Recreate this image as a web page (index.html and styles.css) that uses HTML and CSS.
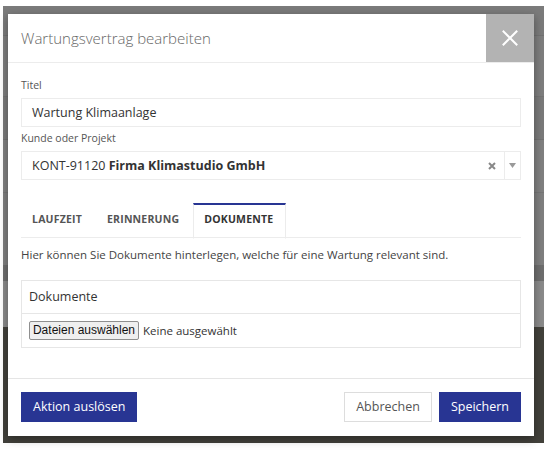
FILE: index.html
```html
<!DOCTYPE html>
<html lang="de">
<head>
<meta charset="utf-8">
<title>Wartungsvertrag bearbeiten</title>
<link rel="stylesheet" href="styles.css">
</head>
<body>
<div class="page">
  <div class="backdrop">
    <div class="bd bd-a"></div>
    <div class="bd bd-b"></div>
    <div class="bd bd-c"></div>
    <div class="bd bd-d"></div>
    <div class="bd bd-e"></div>
    <div class="bd bd-f"></div>
    <div class="bd bd-g"></div>
    <div class="bd bd-dark"></div>
  </div>

  <div class="modal">
    <div class="modal-header">
      <h1 class="modal-title">Wartungsvertrag bearbeiten</h1>
      <button class="close-btn" aria-label="Schließen">
        <svg width="16" height="16" viewBox="0 0 16 16"><path d="M1.5 1.5 L14.5 14.5 M14.5 1.5 L1.5 14.5" stroke="#fff" stroke-width="2" fill="none" stroke-linecap="square"/></svg>
      </button>
    </div>

    <div class="modal-body">
      <label class="field-label">Titel</label>
      <div class="input">Wartung Klimaanlage</div>

      <label class="field-label">Kunde oder Projekt</label>
      <div class="select">
        <span class="select-value">KONT-91120 <b>Firma Klimastudio GmbH</b></span>
        <span class="select-clear">
          <svg width="8" height="8" viewBox="0 0 8 8"><path d="M1 1 L7 7 M7 1 L1 7" stroke="#888" stroke-width="2" fill="none"/></svg>
        </span>
        <span class="select-arrow">
          <svg width="7" height="5" viewBox="0 0 7 5"><path d="M0 0 L7 0 L3.5 5 Z" fill="#999"/></svg>
        </span>
      </div>

      <div class="tabs">
        <div class="tab">Laufzeit</div>
        <div class="tab">Erinnerung</div>
        <div class="tab active">Dokumente</div>
      </div>

      <p class="hint">Hier können Sie Dokumente hinterlegen, welche für eine Wartung relevant sind.</p>

      <div class="panel">
        <div class="panel-head">Dokumente</div>
        <div class="panel-body">
          <span class="file-btn">Dateien auswählen</span>
          <span class="file-status">Keine ausgewählt</span>
        </div>
      </div>
    </div>

    <div class="modal-footer">
      <button class="btn btn-primary">Aktion auslösen</button>
      <div class="footer-right">
        <button class="btn btn-default">Abbrechen</button>
        <button class="btn btn-primary">Speichern</button>
      </div>
    </div>
  </div>
</div>
</body>
</html>
```

FILE: styles.css
```css
* { box-sizing: border-box; }

html, body {
  margin: 0;
  padding: 0;
  background: #ffffff;
  font-family: "Open Sans", "Noto Sans", sans-serif;
}

.page {
  position: relative;
  width: 559px;
  height: 455px;
  overflow: hidden;
}

.backdrop {
  margin: 6px 0 0 3px;
  width: 541px;
  height: 437px;
  display: flex;
  flex-direction: column;
  background: #7e7e7e;
}

.bd { flex: 0 0 auto; }
.bd-a { height: 30px; background: #7b7b7b; border-bottom: 1px solid #727272; }
.bd-b { height: 61px; background: #7e7e7e; border-bottom: 1px solid #747474; }
.bd-c { height: 43px; background: #7a7a7a; border-bottom: 1px solid #727272; }
.bd-d { height: 53px; background: #808080; border-bottom: 1px solid #767676; }
.bd-e { height: 72px; background: #7f7f7f; }
.bd-f { height: 16px; background: #6e6e6e; }
.bd-g { height: 46px; background: #8a8a8a; }
.bd-dark { flex: 1 1 auto; background: #42413b; }

.modal {
  position: absolute;
  left: 8px;
  top: 14px;
  width: 526px;
  height: 422px;
  background: #ffffff;
  box-shadow: 0 3px 9px rgba(0, 0, 0, 0.35);
  display: flex;
  flex-direction: column;
}

.modal-header {
  height: 49px;
  display: flex;
  align-items: flex-start;
  border-bottom: 1px solid #ececec;
}

.modal-title {
  flex: 1 1 auto;
  margin: 0;
  padding: 14px 0 0 13px;
  font-size: 15px;
  font-weight: 300;
  line-height: 20px;
  color: #666666;
}

.close-btn {
  width: 48px;
  height: 48px;
  border: none;
  padding: 0;
  margin: 0;
  background: #b3b3b3;
  display: flex;
  align-items: center;
  justify-content: center;
}

.modal-body {
  flex: 1 1 auto;
  padding: 15px 13px 0 13px;
  display: flex;
  flex-direction: column;
}

.field-label {
  display: block;
  font-size: 10.5px;
  line-height: 15px;
  color: #555555;
  margin-bottom: 5px;
}

.input {
  height: 29px;
  border: 1px solid #ececec;
  padding: 0 10px;
  font-size: 12.5px;
  line-height: 27px;
  color: #333333;
  margin-bottom: 4px;
}

.select {
  height: 29px;
  border: 1px solid #ececec;
  display: flex;
  align-items: center;
  font-size: 12.5px;
  color: #333333;
}

.select-value {
  flex: 1 1 auto;
  padding-left: 10px;
  line-height: 27px;
}

.select-value b { font-weight: 700; }

.select-clear {
  width: 14px;
  display: flex;
  align-items: center;
  justify-content: center;
  margin-right: 5px;
}

.select-arrow {
  width: 16px;
  height: 27px;
  border-left: 1px solid #ececec;
  display: flex;
  align-items: center;
  justify-content: center;
}

.tabs {
  margin-top: 23px;
  display: flex;
  border-bottom: 1px solid #ececec;
  height: 35px;
}

.tab {
  padding: 0 10px;
  font-size: 10.5px;
  font-weight: 700;
  letter-spacing: 0.2px;
  text-transform: uppercase;
  color: #555555;
  line-height: 28px;
  border: 1px solid transparent;
  border-top: 2px solid transparent;
  margin-right: 3px;
}

.tab.active {
  color: #333333;
  border-color: #ececec;
  border-top-color: #283593;
  border-bottom: 1px solid #ffffff;
  margin-bottom: -1px;
  padding: 0 12px 0 10px;
  height: 36px;
}

.hint {
  margin: 8px 0 0 0;
  font-size: 11.5px;
  line-height: 17px;
  color: #444444;
}

.panel {
  margin-top: 17px;
  border: 1px solid #e6e6e6;
}

.panel-head {
  height: 33px;
  padding: 0 7px;
  font-size: 12.5px;
  line-height: 32px;
  color: #333333;
  border-bottom: 1px solid #e6e6e6;
}

.panel-body {
  height: 33px;
  padding: 0 7px;
  display: flex;
  align-items: center;
}

.file-btn {
  display: inline-block;
  height: 19px;
  width: 110px;
  border: 1px solid #8f8f8f;
  border-radius: 2px;
  background: #efefef;
  font-family: "Liberation Sans", Arial, sans-serif;
  font-size: 12px;
  line-height: 17px;
  color: #111111;
  text-align: center;
  margin-right: 4px;
}

.file-status {
  font-size: 11.5px;
  color: #333333;
}

.modal-footer {
  height: 58px;
  border-top: 1px solid #e5e5e5;
  padding: 13px 13px 0 13px;
  display: flex;
  justify-content: space-between;
  align-items: flex-start;
}

.footer-right {
  display: flex;
  gap: 7px;
}

.btn {
  height: 30px;
  border: 1px solid transparent;
  padding: 0 11px;
  font-family: "Open Sans", "Noto Sans", sans-serif;
  font-size: 12.5px;
  line-height: 28px;
  border-radius: 0;
  margin: 0;
}

.btn-primary {
  background: #283593;
  border-color: #283593;
  color: #ffffff;
}

.btn-default {
  background: #ffffff;
  border-color: #dddddd;
  color: #555555;
}
```
